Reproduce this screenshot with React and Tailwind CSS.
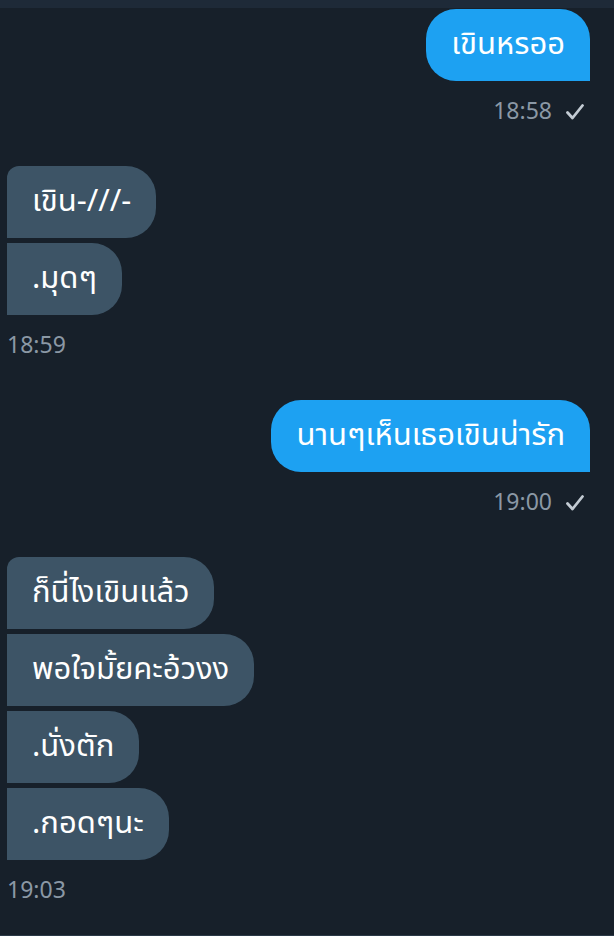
export default function App() {
  const groups = [
    { side: "out", msgs: ["เขินหรออ"], time: "18:58" },
    { side: "in", msgs: ["เขิน-///-", ".มุดๆ"], time: "18:59" },
    { side: "out", msgs: ["นานๆเห็นเธอเขินน่ารัก"], time: "19:00" },
    { side: "in", msgs: ["ก็นี่ไงเขินแล้ว", "พอใจมั้ยคะอ้วงง", ".นั่งตัก", ".กอดๆนะ"], time: "19:03" },
  ];

  return (
    <div
      className="min-h-[936px] bg-[#17202a] flex flex-col border-b border-[#2b3947]"
      style={{ fontFamily: '"Noto Sans Thai", "Noto Sans", "Liberation Sans", sans-serif' }}
    >
      <div className="h-[8px] bg-[#1e2a38]" />
      <div className="flex flex-col pt-[1px]">
        {groups.map((g, gi) => (
          <div
            key={gi}
            className={`flex flex-col ${g.side === "out" ? "items-end pr-[24px]" : "items-start pl-[7px]"} ${gi > 0 ? "mt-[40px]" : ""}`}
          >
            <div className="flex flex-col gap-[5px]">
              {g.msgs.map((m, i) => (
                <div
                  key={i}
                  className={
                    g.side === "out"
                      ? "self-end h-[72px] flex items-center px-[25px] bg-[#1da1f2] text-white text-[31px] rounded-[30px] rounded-br-none"
                      : `self-start h-[72px] flex items-center px-[25px] bg-[#3d5466] text-white text-[31px] rounded-r-[30px] ${i === 0 ? "rounded-tl-[12px]" : ""}`
                  }
                >
                  {m}
                </div>
              ))}
            </div>
            <div
              className={`mt-[17px] h-[28px] flex items-center gap-[14px] text-[23px] text-[#8b98a5] ${g.side === "out" ? "pr-[6px]" : ""}`}
            >
              <span>{g.time}</span>
              {g.side === "out" && (
                <svg width="18" height="16" viewBox="0 0 18 16" fill="none">
                  <path d="M1.5 8.5 L6.5 14 L16.5 1.5" stroke="#c3cbd3" strokeWidth="2.8" strokeLinecap="round" strokeLinejoin="round" />
                </svg>
              )}
            </div>
          </div>
        ))}
      </div>
    </div>
  );
}
